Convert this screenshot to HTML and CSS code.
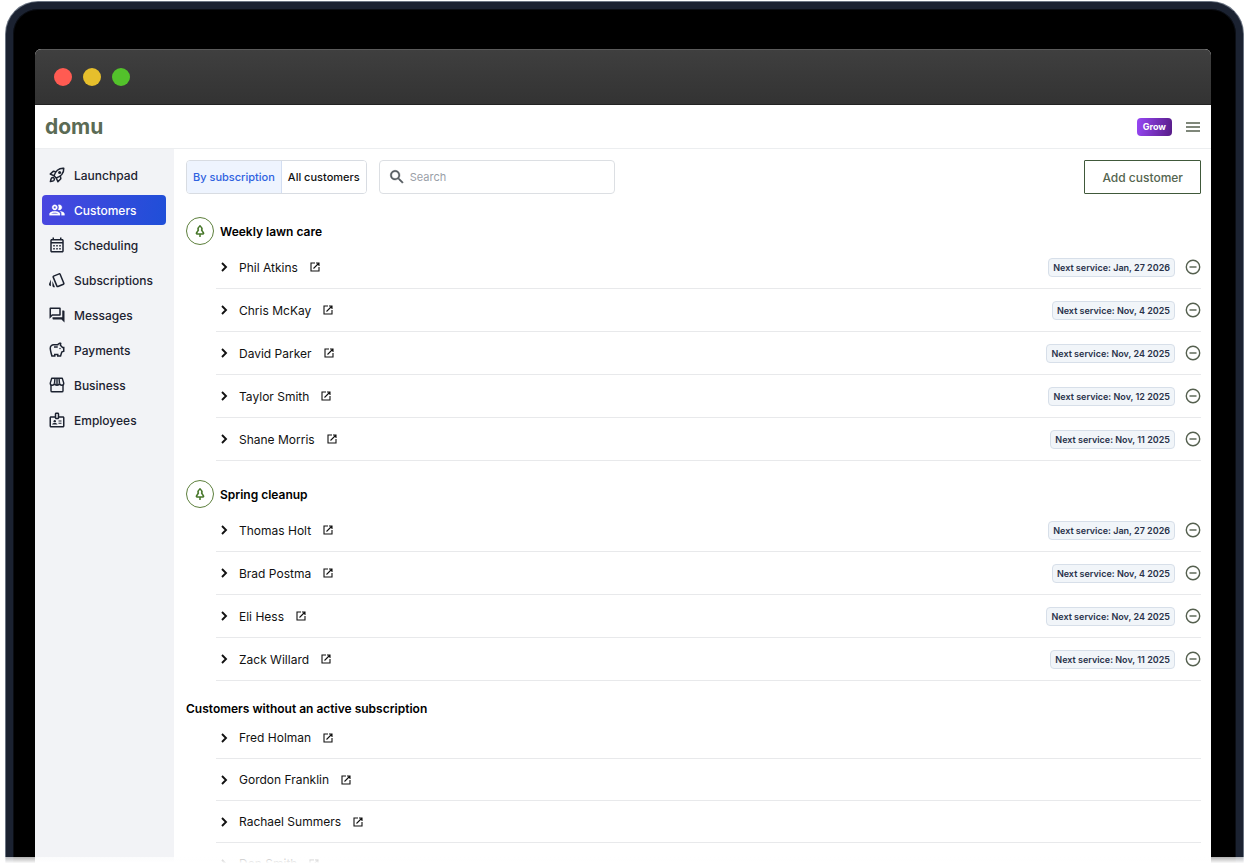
FILE: index.html
```html
<!DOCTYPE html>
<html lang="en">

<head>
    <meta charset="UTF-8">
    <meta name="viewport" content="width=device-width, initial-scale=1.0">
    <title>domu - Customers</title>
    <link rel="stylesheet" href="styles.css">
</head>

<body>
    <!-- icon set -->
    <svg class="sprite" aria-hidden="true">
        <symbol id="i-rocket" viewBox="0 0 24 24">
            <g fill="none" stroke="currentColor" stroke-width="2" stroke-linejoin="round">
                <path d="M8 13c1-3 2.500-5.500 4.500-7.300C15 3.500 18 2.800 21 3c.2 3-.5 6-2.700 8.500C16.500 13.500 14 15 11 16z" />
                <path d="M10.500 7.500l-3.500-.6L3 10.800l5 2.200M16.500 13.500l.6 3.500-3.900 4L11 16" />
                <path d="M4.700 16.200c1-1 2.400-1 3.200-.1.900.9.800 2.200-.1 3.200-.9.900-4.600 1.500-4.600 1.500s.6-3.700 1.500-4.600z" />
            </g>
            <circle cx="15.500" cy="8.500" r="2" fill="currentColor" />
        </symbol>
        <symbol id="i-people" viewBox="0 0 24 24">
            <path d="M9 13.750c-2.340 0-7 1.170-7 3.500V19h14v-1.750c0-2.330-4.660-3.500-7-3.500zM4.340 17c.84-.58 2.870-1.250 4.660-1.250s3.820.67 4.660 1.250H4.340zM9 12c1.930 0 3.500-1.570 3.500-3.500S10.930 5 9 5 5.500 6.570 5.500 8.500 7.070 12 9 12zm0-5c.83 0 1.500.67 1.500 1.500S9.830 10 9 10s-1.500-.67-1.500-1.500S8.170 7 9 7zm7.040 6.810c1.160.84 1.960 1.960 1.960 3.440V19h4v-1.750c0-2.020-3.500-3.170-5.960-3.440zM15 12c1.930 0 3.500-1.570 3.500-3.500S16.930 5 15 5c-.54 0-1.040.13-1.500.35.63.89 1 1.980 1 3.150s-.37 2.260-1 3.150c.46.22.96.35 1.500.35z" stroke="currentColor" stroke-width=".4" />
        </symbol>
        <symbol id="i-calendar" viewBox="0 0 24 24">
            <path d="M19 4h-1V2h-2v2H8V2H6v2H5c-1.110 0-1.990.9-1.990 2L3 20c0 1.100.89 2 2 2h14c1.100 0 2-.9 2-2V6c0-1.100-.9-2-2-2zm0 16H5V10h14v10zm0-12H5V6h14v2zM9 14H7v-2h2v2zm4 0h-2v-2h2v2zm4 0h-2v-2h2v2zm-8 4H7v-2h2v2zm4 0h-2v-2h2v2zm4 0h-2v-2h2v2z" />
        </symbol>
        <symbol id="i-cards" viewBox="0 0 24 24">
            <path d="M2.530 19.650l1.340.56v-9.030l-2.430 5.860c-.41 1.020.08 2.190 1.090 2.610zm19.500-3.700L17.070 3.980c-.31-.75-1.040-1.210-1.810-1.230-.26 0-.53.04-.79.15L7.100 5.950c-.75.31-1.210 1.030-1.230 1.800-.01.27.04.54.15.8l4.960 11.970c.31.76 1.050 1.220 1.830 1.230.26 0 .52-.05.77-.15l7.360-3.050c1.020-.42 1.510-1.590 1.090-2.600zm-9.200 3.800L7.870 7.790l7.350-3.040h.01l4.950 11.950-7.350 3.050zM5.880 19.750c0 1.100.9 2 2 2h1.450l-3.450-8.340v6.340z" />
        </symbol>
        <symbol id="i-chat" viewBox="0 0 24 24">
            <path d="M15 4v7H5.170L4 12.170V4h11m1-2H3c-.55 0-1 .45-1 1v14l4-4h10c.55 0 1-.45 1-1V3c0-.55-.45-1-1-1zm5 4h-2v9H6v2c0 .55.45 1 1 1h11l4 4V7c0-.55-.45-1-1-1z" />
        </symbol>
        <symbol id="i-savings" viewBox="0 0 24 24">
            <path d="M15 10c0-.55.45-1 1-1s1 .45 1 1-.45 1-1 1-1-.45-1-1zM8 9h5V7H8v2zm14-1.500v6.970l-2.820.94L17.500 21H12v-2h-2v2H4.500S2 12.540 2 9.500C2 6.460 4.460 4 7.500 4h5c.91-1.210 2.360-2 4-2 .83 0 1.500.67 1.500 1.500 0 .21-.04.4-.12.58-.14.34-.26.73-.32 1.150l2.270 2.270H22zm-2 2h-1L15.500 6c0-.65.09-1.290.26-1.910-.97.25-1.760.97-2.090 1.910H7.500C5.570 6 4 7.570 4 9.500c0 1.880 1.220 6.650 2.010 9.500H8v-2h6v2h2.010l1.550-5.150 2.440-.82V9.500z" />
        </symbol>
        <symbol id="i-store" viewBox="0 0 24 24">
            <g fill="none" stroke="currentColor" stroke-width="1.900" stroke-linejoin="round">
                <path d="M4 12v7.500c0 .8.700 1.500 1.500 1.500h13c.8 0 1.500-.7 1.500-1.500V12" />
                <path d="M5 3h14l2 6.500c0 1.700-1.200 2.800-2.700 2.800S15.500 11 15.300 9.500c-.1 1.600-1.500 2.800-3.300 2.800S8.800 11 8.700 9.500c-.2 1.500-1.400 2.800-3 2.800S3 11 3 9.500zM9.300 3l-.6 6.500M14.700 3l.6 6.500M12 3v9" />
            </g>
        </symbol>
        <symbol id="i-badge" viewBox="0 0 24 24">
            <path d="M20 7h-5V4c0-1.100-.9-2-2-2h-2c-1.100 0-2 .9-2 2v3H4c-1.100 0-2 .9-2 2v11c0 1.100.9 2 2 2h16c1.100 0 2-.9 2-2V9c0-1.100-.9-2-2-2zM11 4h2v5h-2V4zm9 16H4V9h5c0 1.100.9 2 2 2h2c1.100 0 2-.9 2-2h5v11zM14 12.500h4V14h-4zM14 15.500h4V17h-4zM5.500 18c0-1.300 1.700-2 3.500-2s3.500.7 3.500 2z" />
            <circle cx="9" cy="13.500" r="1.600" />
        </symbol>
        <symbol id="i-search" viewBox="0 0 24 24">
            <path d="M15.500 14h-.79l-.28-.27C15.410 12.590 16 11.110 16 9.500 16 5.910 13.090 3 9.500 3S3 5.910 3 9.500 5.910 16 9.500 16c1.610 0 3.090-.59 4.230-1.570l.27.28v.79l5 4.990L20.490 19l-4.990-5zm-6 0C7.010 14 5 11.990 5 9.500S7.010 5 9.500 5 14 7.010 14 9.500 11.990 14 9.500 14z" stroke="currentColor" stroke-width=".5" />
        </symbol>
        <symbol id="i-menu" viewBox="0 0 16 16">
            <path d="M1 4h14M1 8h14M1 12h14" fill="none" stroke="currentColor" stroke-width="1.400" />
        </symbol>
        <symbol id="i-tree" viewBox="0 0 16 16">
            <path d="M8 2.800c1.500 1.400 2.200 2.600 2 3.600l-.4.600 1.900 3c.3.500 0 1-.5 1H5c-.5 0-.8-.5-.5-1l1.900-3-.4-.6c-.2-1 .5-2.200 2-3.600zM8 11v3" fill="none" stroke="currentColor" stroke-width="1.500" stroke-linejoin="round" />
        </symbol>
        <symbol id="i-chevron" viewBox="0 0 12 12">
            <path d="M4 2l4 4-4 4" fill="none" stroke="currentColor" stroke-width="1.900" />
        </symbol>
        <symbol id="i-open" viewBox="0 0 12 12">
            <path d="M6 2H2v8h8V6M7 2h3v3M10 2L4.500 7.500" fill="none" stroke="currentColor" stroke-width="1.100" />
        </symbol>
        <symbol id="i-minus" viewBox="0 0 16 16">
            <path d="M4.500 8h7" fill="none" stroke="currentColor" stroke-width="1.400" />
            <circle cx="8" cy="8" r="6.700" fill="none" stroke="currentColor" stroke-width="1.400" />
        </symbol>
    </svg>

    <div class="device">
        <div class="screen">
            <div class="title-bar">
                <span class="dot red"></span>
                <span class="dot yellow"></span>
                <span class="dot green"></span>
            </div>

            <header class="header">
                <a class="logo" href="#">domu</a>
                <span class="plan">Grow</span>
                <button class="icon-button" type="button" aria-label="Menu"><svg class="icon-md"><use href="#i-menu" /></svg></button>
            </header>

            <div class="body">
                <nav class="sidebar">
                    <a class="nav-item" href="#"><svg class="icon-lg"><use href="#i-rocket" /></svg>Launchpad</a>
                    <a class="nav-item active" href="#" aria-current="page"><svg class="icon-lg"><use href="#i-people" /></svg>Customers</a>
                    <a class="nav-item" href="#"><svg class="icon-lg"><use href="#i-calendar" /></svg>Scheduling</a>
                    <a class="nav-item" href="#"><svg class="icon-lg"><use href="#i-cards" /></svg>Subscriptions</a>
                    <a class="nav-item" href="#"><svg class="icon-lg"><use href="#i-chat" /></svg>Messages</a>
                    <a class="nav-item" href="#"><svg class="icon-lg"><use href="#i-savings" /></svg>Payments</a>
                    <a class="nav-item" href="#"><svg class="icon-lg"><use href="#i-store" /></svg>Business</a>
                    <a class="nav-item" href="#"><svg class="icon-lg"><use href="#i-badge" /></svg>Employees</a>
                </nav>

                <main class="content">
                    <div class="toolbar">
                        <div class="tabs">
                            <button class="tab selected" type="button">By subscription</button>
                            <button class="tab" type="button">All customers</button>
                        </div>
                        <label class="search">
                            <svg class="icon-lg"><use href="#i-search" /></svg>
                            <input type="search" placeholder="Search" aria-label="Search customers">
                        </label>
                        <button class="add-button" type="button">Add customer</button>
                    </div>
                    <div id="groups"></div>
                </main>
            </div>
        </div>
    </div>
    <div class="fade"></div>

    <script>
        const data = [{
            title: "Weekly lawn care",
            icon: true,
            customers: [
                ["Phil Atkins", "Jan, 27 2026"],
                ["Chris McKay", "Nov, 4 2025"],
                ["David Parker", "Nov, 24 2025"],
                ["Taylor Smith", "Nov, 12 2025"],
                ["Shane Morris", "Nov, 11 2025"]
            ]
        }, {
            title: "Spring cleanup",
            icon: true,
            customers: [
                ["Thomas Holt", "Jan, 27 2026"],
                ["Brad Postma", "Nov, 4 2025"],
                ["Eli Hess", "Nov, 24 2025"],
                ["Zack Willard", "Nov, 11 2025"]
            ]
        }, {
            title: "Customers without an active subscription",
            icon: false,
            customers: [
                ["Fred Holman"],
                ["Gordon Franklin"],
                ["Rachael Summers"],
                ["Don Smith"]
            ]
        }];

        function renderRow([name, next]) {
            const service = next ? `
                <span class="next">Next service: ${next}</span>
                <button class="icon-button" type="button" aria-label="Remove ${name}"><svg class="icon-md"><use href="#i-minus" /></svg></button>` : '';
            return `
            <li class="row">
                <button class="icon-button dark" type="button" aria-label="Expand ${name}"><svg class="icon-sm"><use href="#i-chevron" /></svg></button>
                <span class="name">${name}</span>
                <a class="open" href="#" aria-label="Open ${name}"><svg class="icon-sm"><use href="#i-open" /></svg></a>
                ${service}
            </li>`;
        }

        document.getElementById('groups').innerHTML = data.map(group => `
            <section class="group${group.icon ? '' : ' plain'}">
                <h2 class="group-title">
                    ${group.icon ? '<span class="group-icon"><svg class="icon-md"><use href="#i-tree" /></svg></span>' : ''}
                    ${group.title}
                </h2>
                <ul class="rows">${group.customers.map(renderRow).join('')}</ul>
            </section>`).join('');
    </script>
</body>

</html>
```
FILE: styles.css
```css
* {
    box-sizing: border-box;
}

body {
    margin: 0;
    height: 100vh;
    overflow: hidden;
    background: white;
    color: #111;
    font-family: Inter, "Liberation Sans", sans-serif;
    font-size: 12px;
}

button,
input {
    font: inherit;
    color: inherit;
}

a {
    color: inherit;
    text-decoration: none;
}

svg {
    display: block;
    flex: none;
    fill: currentColor;
}

.sprite {
    display: none;
}

.icon-lg {
    width: 18px;
    height: 18px;
}

.icon-md {
    width: 16px;
    height: 16px;
}

.icon-sm {
    width: 12px;
    height: 12px;
}

/* laptop frame */
.device {
    min-height: 100vh;
    margin: 2px 7px 0 6px;
    padding: 40px 25px 0 22px;
    background: black;
    border: 7px solid #1b2231;
    border-bottom: 0;
    border-radius: 32px 32px 0 0;
    box-shadow: inset 0 0 0 1px #0b0e14, 0 0 0 1px #6c7583;
}

.screen {
    background: white;
    border-radius: 6px 6px 0 0;
    overflow: hidden;
}

.title-bar {
    display: flex;
    align-items: center;
    gap: 11px;
    height: 56px;
    padding-left: 19px;
    background: linear-gradient(#3f3f3f, #333);
    border-top: 1px solid #5a5a5a;
    border-bottom: 1px solid #222;
}

.dot {
    width: 18px;
    height: 18px;
    border-radius: 50%;
}

.red {
    background: #ff5b52;
}

.yellow {
    background: #e6bf2c;
}

.green {
    background: #53c22b;
}

.header {
    display: flex;
    align-items: center;
    height: 44px;
    padding: 0 10px;
    border-bottom: 1px solid #eceef0;
}

.logo {
    margin-right: auto;
    color: #5b6b55;
    font-size: 21px;
    font-weight: 700;
}

.plan {
    margin-right: 13px;
    padding: 0 6px;
    border-radius: 4px;
    background: linear-gradient(100deg, #9747f5, #571c87);
    color: white;
    font-size: 9px;
    font-weight: 700;
    line-height: 18px;
}

.icon-button {
    padding: 0;
    border: 0;
    background: none;
    color: #55604f;
}

.icon-button.dark {
    color: #111;
}

.body {
    display: flex;
}

.sidebar {
    display: flex;
    flex: none;
    flex-direction: column;
    gap: 5px;
    width: 139px;
    padding: 11px 8px 0 7px;
    background: #f2f3f6;
}

.nav-item {
    display: flex;
    align-items: center;
    gap: 8px;
    height: 30px;
    padding-left: 6px;
    border-radius: 4px;
    color: #1c2230;
    font-weight: 500;
}

.nav-item.active {
    background: linear-gradient(100deg, #4a46e0, #1f4fd8);
    color: white;
}

.content {
    flex: 1;
    min-width: 0;
    padding: 11px 10px 0 12px;
}

.toolbar {
    display: flex;
    gap: 12px;
    height: 34px;
}

.tabs {
    display: flex;
    border: 1px solid #d8dce2;
    border-radius: 4px;
    overflow: hidden;
}

.tab {
    padding: 0 6px;
    border: 0;
    background: white;
    font-size: 11px;
    font-weight: 500;
}

.tab.selected {
    border-right: 1px solid #d3def2;
    background: #eef4fe;
    color: #2f62e0;
}

.search {
    display: flex;
    align-items: center;
    gap: 2px;
    width: 236px;
    padding-left: 8px;
    border: 1px solid #dcdfe3;
    border-radius: 4px;
    color: #555b60;
}

.search input {
    flex: 1;
    min-width: 0;
    border: 0;
    outline: 0;
    background: none;
    font-size: 11px;
}

.search input::placeholder {
    color: #9aa0a8;
}

.add-button {
    margin-left: auto;
    padding: 0 17px;
    border: 1px solid #40593a;
    border-radius: 1px;
    background: white;
    color: #55654f;
    font-weight: 500;
}

.group {
    padding-top: 22px;
}

.group + .group {
    padding-top: 18px;
}

.group-title {
    display: flex;
    align-items: center;
    gap: 6px;
    height: 30px;
    margin: 0;
    font-size: 12px;
    font-weight: 600;
    color: black;
}

.group-icon {
    display: flex;
    align-items: center;
    justify-content: center;
    width: 28px;
    height: 28px;
    border: 1px solid #5d7f3c;
    border-radius: 50%;
    color: #47772a;
}

.rows {
    margin: 0 0 0 30px;
    padding: 0;
    list-style: none;
}

.row {
    display: flex;
    align-items: center;
    height: 43px;
    padding-left: 2px;
    border-bottom: 1px solid #e8e9eb;
}

.name {
    margin: 0 11px 0 9px;
}

.open {
    margin-right: auto;
}

.next {
    margin-right: 10px;
    padding: 0 4px;
    border: 1px solid #d7dfe9;
    border-radius: 4px;
    background: #f1f5f9;
    color: #29324a;
    font-size: 9px;
    font-weight: 600;
    line-height: 17px;
}

/* customers with no subscription sit a little tighter */
.plain .group-title {
    height: 18px;
}

.plain .row {
    height: 42px;
}

/* the page dissolves into white below the frame */
.fade {
    position: fixed;
    right: 0;
    bottom: 0;
    left: 0;
    height: 8px;
    background: linear-gradient(rgba(255, 255, 255, .7), white 80%);
}
```
